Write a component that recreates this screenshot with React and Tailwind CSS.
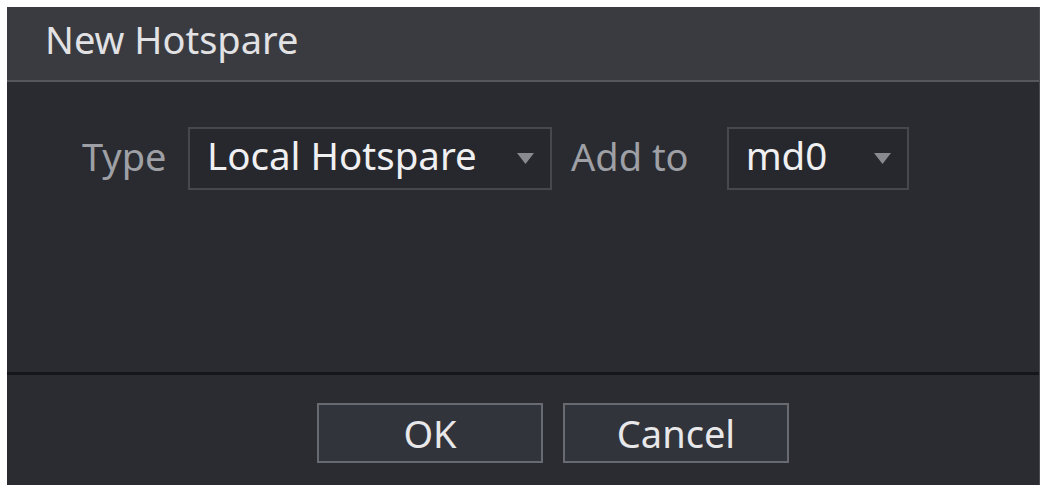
import React, { useState } from "react";

function Select({ value, width }) {
  return (
    <div
      className="flex items-center justify-between h-[63px] border-2 border-[#46484e] bg-[#26282d] pl-[17px] pr-[16px] pb-[6px]"
      style={{ width }}
    >
      <span className="text-[38.5px] leading-none text-[#f0f0f2]">{value}</span>
      <svg width="17" height="11" viewBox="0 0 17 11" className="mt-[6px]">
        <path d="M0 0 L17 0 L8.5 11 Z" fill="#888a90" />
      </svg>
    </div>
  );
}

function Button({ children }) {
  return (
    <button className="w-[226px] h-[60px] border-2 border-[#686a71] bg-[#32343b] text-[38px] leading-none text-[#e8e8ea]">
      {children}
    </button>
  );
}

export default function App() {
  const [type] = useState("Local Hotspare");
  const [target] = useState("md0");

  return (
    <div className="w-[1045px] h-[489px] bg-white pt-[7px] pl-[7px]" style={{ fontFamily: '"Noto Sans", "Open Sans", sans-serif' }}>
      <div className="w-[1033px] h-[478px] flex flex-col border-r border-[#4a4c51]">
        <div className="h-[73px] bg-[#393b40] flex items-center pl-[38px] pb-[9px]">
          <h1 className="text-[38px] leading-none text-[#e2e2e5]">New Hotspare</h1>
        </div>
        <div className="h-[2px] bg-[#55575c]" />

        <div className="h-[290px] bg-[#292b30] pt-[45px]">
          <div className="flex items-center">
            <span className="ml-[75px] mb-[6px] w-[90px] text-[38px] leading-none text-[#9ea0a5]">Type</span>
            <div className="ml-[16px]">
              <Select value={type} width={364} />
            </div>
            <span className="ml-[19px] mb-[6px] text-[38px] leading-none text-[#9ea0a5]">Add to</span>
            <div className="ml-[38px]">
              <Select value={target} width={182} />
            </div>
          </div>
        </div>

        <div className="h-[3px] bg-[#16171a]" />

        <div className="flex-1 bg-[#2a2c31] pt-[28px] pl-[310px] flex gap-[20px]">
          <Button>OK</Button>
          <Button>Cancel</Button>
        </div>
      </div>
    </div>
  );
}
